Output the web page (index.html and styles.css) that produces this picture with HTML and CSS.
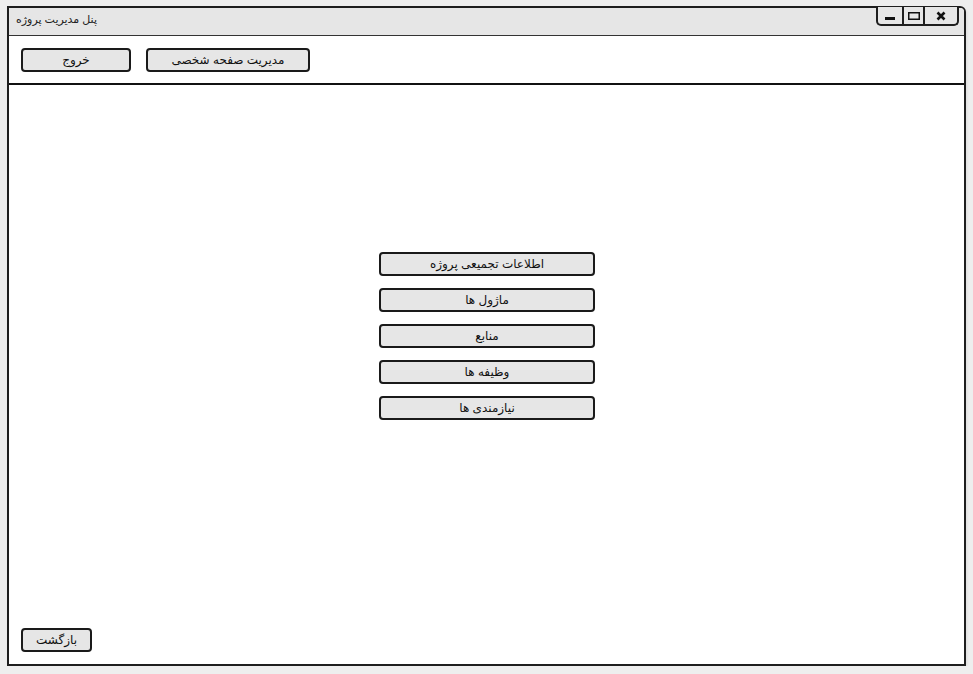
FILE: index.html
```html
<!DOCTYPE html>
<html lang="fa">
<head>
<meta charset="utf-8">
<title>پنل مدیریت پروژه</title>
<link rel="stylesheet" href="styles.css">
</head>
<body>
<div class="window">
  <div class="titlebar">
    <span class="title" dir="rtl">پنل مدیریت پروژه</span>
    <div class="controls">
      <span class="ctl ctl-min"><svg width="12" height="10" viewBox="0 0 12 10"><rect x="1" y="6" width="10" height="3" fill="#111"/></svg></span>
      <span class="ctl ctl-max"><svg width="14" height="10" viewBox="0 0 14 10"><rect x="1.75" y="1.75" width="10.5" height="6.5" fill="none" stroke="#111" stroke-width="1.5"/></svg></span>
      <span class="ctl ctl-close"><svg width="12" height="10" viewBox="0 0 12 10"><path d="M2.5 1.5 L9.5 8.5 M9.5 1.5 L2.5 8.5" stroke="#111" stroke-width="2.6"/></svg></span>
    </div>
  </div>
  <div class="toolbar">
    <button class="btn btn-exit" dir="rtl">خروج</button>
    <button class="btn btn-profile" dir="rtl">مدیریت صفحه شخصی</button>
  </div>
  <div class="main">
    <div class="menu">
      <button class="btn btn-menu" dir="rtl">اطلاعات تجمیعی پروژه</button>
      <button class="btn btn-menu" dir="rtl">ماژول ها</button>
      <button class="btn btn-menu" dir="rtl">منابع</button>
      <button class="btn btn-menu" dir="rtl">وظیفه ها</button>
      <button class="btn btn-menu" dir="rtl">نیازمندی ها</button>
    </div>
    <div class="footer">
      <button class="btn btn-back" dir="rtl">بازگشت</button>
    </div>
  </div>
</div>
</body>
</html>
```

FILE: styles.css
```css
html, body {
  margin: 0;
  padding: 0;
  background: #eeeeee;
  font-family: "Liberation Sans", "DejaVu Sans", Arial, sans-serif;
}

body {
  padding: 6px 0 0 7px;
}

.window {
  box-sizing: border-box;
  width: 959px;
  height: 660px;
  border: 2px solid #1e1e1e;
  border-top-right-radius: 6px;
  background: #ffffff;
  display: flex;
  flex-direction: column;
  box-shadow: 1px 2px 3px rgba(0,0,0,0.08);
}

.titlebar {
  height: 27px;
  background: #e6e6e6;
  border-bottom: 1px solid #333;
  border-top-right-radius: 4px;
  display: flex;
  justify-content: space-between;
  align-items: flex-start;
  padding-left: 7px;
}

.title {
  font-size: 11px;
  color: #222;
  line-height: 22px;
}

.controls {
  display: flex;
  box-sizing: border-box;
  height: 19px;
  margin-top: -1px;
  margin-right: 5px;
  border: 2px solid #1e1e1e;
  border-top: none;
  border-radius: 0 0 5px 5px;
  background: #e6e6e6;
}

.ctl {
  display: flex;
  align-items: center;
  justify-content: center;
  border-right: 2px solid #1e1e1e;
}

.ctl-min { width: 24px; }
.ctl-max { width: 19px; }

.ctl-close {
  width: 32px;
  border-right: none;
}

.toolbar {
  box-sizing: border-box;
  height: 49px;
  border-bottom: 2px solid #111;
  display: flex;
  align-items: flex-start;
  gap: 15px;
  padding: 12px 0 0 12px;
}

.btn {
  box-sizing: border-box;
  height: 24px;
  border: 2px solid #1a1a1a;
  border-radius: 4px;
  background: #e6e6e6;
  font-family: "Liberation Sans", "DejaVu Sans", Arial, sans-serif;
  font-size: 12px;
  color: #111;
  padding: 0;
  line-height: 18px;
  text-align: center;
}

.btn-exit { width: 110px; }
.btn-profile { width: 164px; }

.main {
  flex: 1;
  display: flex;
  flex-direction: column;
  align-items: stretch;
}

.menu {
  display: flex;
  flex-direction: column;
  align-items: center;
  gap: 12px;
  padding-top: 167px;
  padding-left: 1px;
}

.btn-menu { width: 216px; }

.footer {
  margin-top: auto;
  padding: 0 0 12px 12px;
}

.btn-back { width: 71px; }
```
